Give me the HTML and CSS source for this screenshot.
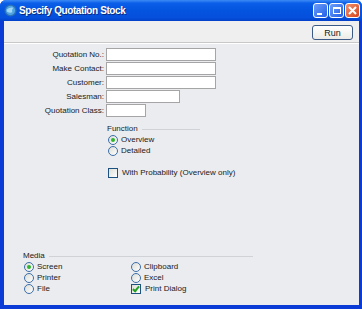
FILE: index.html
```html
<!DOCTYPE html>
<html lang="en">
<head>
    <meta charset="UTF-8">
    <title>Specify Quotation Stock</title>
    <link rel="stylesheet" href="styles.css">
</head>
<body>
    <div class="window">
        <!-- title bar -->
        <div class="titlebar">
            <svg class="app-icon" width="13" height="13" viewBox="0 0 14 14">
                <circle cx="7" cy="7" r="6.5" fill="#2a6fb8"/>
                <circle cx="7" cy="7" r="5" fill="#4fa3e0"/>
                <path d="M3 6 Q6 3 10 4 Q8 6 9 9 Q6 10 3 8 Z" fill="#9fd6f5"/>
            </svg>
            <span class="title">Specify Quotation Stock</span>
            <div class="title-buttons">
                <span class="tbtn"><span class="min-glyph"></span></span>
                <span class="tbtn"><span class="max-glyph"></span></span>
                <span class="tbtn close">
                    <svg width="9" height="9" viewBox="0 0 9 9"><path d="M1 1 L8 8 M8 1 L1 8" stroke="#fff" stroke-width="2"/></svg>
                </span>
            </div>
        </div>

        <div class="frame">
            <div class="toolbar">
                <button class="run-button">Run</button>
            </div>

            <div class="content">
                <div class="fields">
                    <label>Quotation No.:</label><span class="field wide"></span>
                    <label>Make Contact:</label><span class="field wide"></span>
                    <label>Customer:</label><span class="field wide"></span>
                    <label>Salesman:</label><span class="field mid"></span>
                    <label>Quotation Class:</label><span class="field short"></span>
                </div>

                <div class="group function">
                    <div class="group-title">Function <span class="rule"></span></div>
                    <div class="opt"><span class="radio on"></span>Overview</div>
                    <div class="opt"><span class="radio"></span>Detailed</div>
                </div>

                <div class="opt probability"><span class="check"></span>With Probability (Overview only)</div>

                <div class="group media">
                    <div class="group-title">Media <span class="rule"></span></div>
                    <div class="media-grid">
                        <div class="opt"><span class="radio on"></span>Screen</div>
                        <div class="opt"><span class="radio"></span>Clipboard</div>
                        <div class="opt"><span class="radio"></span>Printer</div>
                        <div class="opt"><span class="radio"></span>Excel</div>
                        <div class="opt"><span class="radio"></span>File</div>
                        <div class="opt"><span class="check on"></span>Print Dialog</div>
                    </div>
                </div>
            </div>
        </div>
    </div>
</body>
</html>
```

FILE: styles.css
```css
body {
    margin: 0;
    font-family: "Liberation Sans", Arial, sans-serif;
    font-size: 8px;
    color: #1a1a1a;
}

.window {
    width: 362px;
    height: 309px;
    display: flex;
    flex-direction: column;
    background-color: #0b3bd6;
    border-radius: 6px 6px 0 0;
    overflow: hidden;
}

/* title bar */
.titlebar {
    height: 21px;
    display: flex;
    align-items: center;
    padding: 0 2px 0 4px;
    background: linear-gradient(#3d8bf5 0%, #0a5ee8 15%, #0454e0 50%, #0550dc 85%, #0340c8 100%);
}

.app-icon {
    margin-right: 2px;
}

.title {
    color: white;
    font-family: "Liberation Sans", sans-serif;
    font-weight: bold;
    font-size: 10px;
    letter-spacing: -0.4px;
    text-shadow: 1px 1px #0a2a80;
    flex: 1;
}

.title-buttons {
    display: flex;
    gap: 1px;
}

.tbtn {
    width: 15px;
    height: 15px;
    border: 1px solid #fff;
    border-radius: 3px;
    background: linear-gradient(135deg, #6b9df8, #2360e8);
    display: flex;
    align-items: center;
    justify-content: center;
    box-sizing: border-box;
}

.tbtn.close {
    background: linear-gradient(135deg, #f0936e, #d8431a);
}

.min-glyph {
    width: 5px;
    height: 2px;
    background: white;
    margin-top: 6px;
    margin-right: 3px;
}

.max-glyph {
    width: 8px;
    height: 7px;
    border: 1px solid white;
    border-top-width: 2px;
    box-sizing: border-box;
}

/* body of window */
.frame {
    flex: 1;
    margin: 0 3px 4px 4px;
    display: flex;
    flex-direction: column;
    background-color: #eaecf0;
}

.toolbar {
    height: 21px;
    display: flex;
    justify-content: flex-end;
    align-items: center;
    padding-right: 6px;
    background-color: #efefef;
    border-bottom: 1px solid #c8c8c8;
    box-shadow: 0 1px 0 #fff;
}

.run-button {
    width: 41px;
    height: 15px;
    padding: 0;
    font-family: "Liberation Sans", Arial, sans-serif;
    font-size: 9px;
    color: #1a1a1a;
    background: linear-gradient(#ffffff, #ecebe6);
    border: 1px solid #3c5a86;
    border-radius: 3px;
    margin-top: 2px;
}

.content {
    flex: 1;
    padding-top: 5px;
}

.fields {
    display: grid;
    grid-template-columns: 100px auto;
    row-gap: 1px;
    column-gap: 2px;
    align-items: center;
}

.fields label {
    text-align: right;
}

.field {
    height: 13px;
    box-sizing: border-box;
    background: white;
    border: 1px solid #a5a5a5;
}

.wide { width: 110px; }
.mid { width: 74px; }
.short { width: 40px; }

.group-title {
    display: flex;
    align-items: center;
    gap: 4px;
    height: 11px;
}

.rule {
    flex: 1;
    height: 0;
    border-top: 1px solid #cfd3d8;
    margin-top: 2px;
}

.function {
    width: 93px;
    margin: 6px 0 0 103px;
}

.opt {
    display: flex;
    align-items: center;
    height: 11px;
}

.function .opt {
    padding-left: 1px;
}

.radio {
    width: 10px;
    height: 10px;
    box-sizing: border-box;
    border: 1px solid #3c6ea8;
    border-radius: 50%;
    background: linear-gradient(135deg, #dcdcd6, #ffffff);
    margin-right: 3px;
    display: flex;
    align-items: center;
    justify-content: center;
}

.radio.on::after {
    content: "";
    width: 4px;
    height: 4px;
    border-radius: 50%;
    background: #2fb52f;
}

.check {
    width: 10px;
    height: 10px;
    box-sizing: border-box;
    border: 1px solid #1c5180;
    background: linear-gradient(135deg, #dcdcd6, #ffffff);
    margin-right: 4px;
    position: relative;
}

.check.on::after {
    content: "";
    position: absolute;
    left: 2px;
    top: 0px;
    width: 2px;
    height: 5px;
    border: solid #21a121;
    border-width: 0 2px 2px 0;
    transform: rotate(40deg);
}

.probability {
    margin: 11px 0 0 104px;
}

.media {
    width: 230px;
    margin: 72px 0 0 19px;
}

.media-grid {
    display: grid;
    grid-template-columns: 107px auto;
    padding-left: 1px;
}
```
